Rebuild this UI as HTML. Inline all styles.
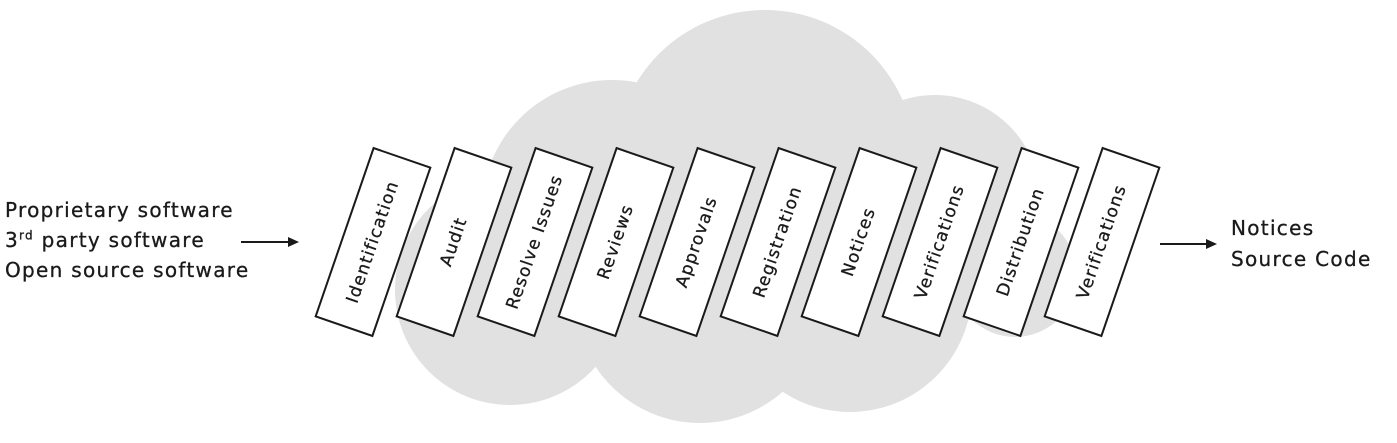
<!DOCTYPE html>
<html><head><meta charset="utf-8"><style>
html,body{margin:0;padding:0;background:#fff;width:1397px;height:443px;overflow:hidden;position:relative;font-family:"DejaVu Sans","Liberation Sans",sans-serif;color:#1a1a1a}
.t{position:absolute;font-size:20px;letter-spacing:1.3px;white-space:nowrap;-webkit-text-stroke:0.3px #1a1a1a}
.box{position:absolute;width:58px;height:176px;border:2px solid #1a1a1a;background:#fff;transform:rotate(19deg)}
.box span{position:absolute;left:50%;top:50%;transform:translate(-50%,-50%) rotate(-90deg);font-size:17px;letter-spacing:1.2px;white-space:nowrap;-webkit-text-stroke:0.3px #1a1a1a}
</style></head><body>
<svg width="1397" height="443" style="position:absolute;left:0;top:0">
<g fill="#e1e1e1">
<circle cx="765" cy="160" r="150"/>
<circle cx="612" cy="210" r="130"/>
<circle cx="935" cy="200" r="105"/>
<circle cx="1015" cy="275" r="62"/>
<circle cx="510" cy="290" r="115"/>
<circle cx="700" cy="298" r="125"/>
<circle cx="850" cy="290" r="122"/>
<rect x="520" y="180" width="450" height="140"/>
</g>
<g stroke="#1a1a1a" stroke-width="2" fill="#1a1a1a">
<line x1="241" y1="242" x2="290" y2="242"/><path d="M288 237 L299 242 L288 247Z" stroke="none"/>
<line x1="1160" y1="244" x2="1208" y2="244"/><path d="M1206 239 L1217 244 L1206 249Z" stroke="none"/>
</g>
</svg>
<div class="t" style="left:5px;top:198px">Proprietary software</div>
<div class="t" style="left:5px;top:228px">3<sup style="font-size:12px">rd</sup> party software</div>
<div class="t" style="left:5px;top:258px">Open source software</div>
<div class="t" style="left:1231px;top:216px">Notices</div>
<div class="t" style="left:1231px;top:247px">Source Code</div>

<div class="box" style="left:342px;top:152px"><span>Identification</span></div>
<div class="box" style="left:423px;top:152px"><span>Audit</span></div>
<div class="box" style="left:504px;top:152px"><span>Resolve Issues</span></div>
<div class="box" style="left:585px;top:152px"><span>Reviews</span></div>
<div class="box" style="left:666px;top:152px"><span>Approvals</span></div>
<div class="box" style="left:747px;top:152px"><span>Registration</span></div>
<div class="box" style="left:828px;top:152px"><span>Notices</span></div>
<div class="box" style="left:909px;top:152px"><span>Verifications</span></div>
<div class="box" style="left:990px;top:152px"><span>Distribution</span></div>
<div class="box" style="left:1071px;top:152px"><span>Verifications</span></div>
</body></html>
